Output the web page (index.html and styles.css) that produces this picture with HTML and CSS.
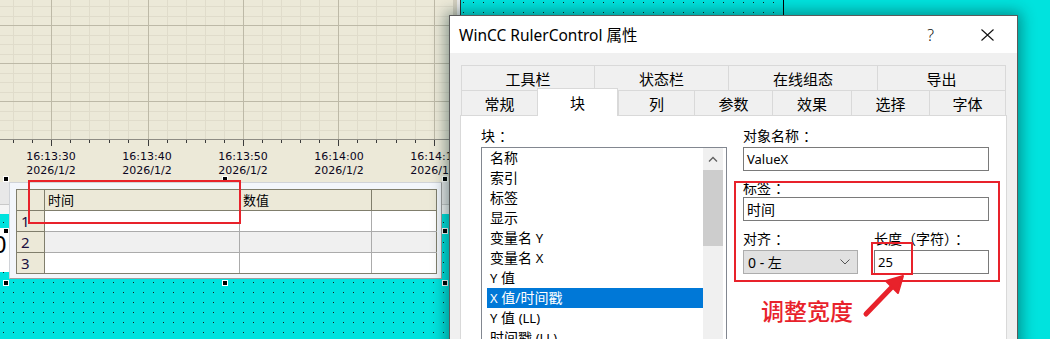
FILE: index.html
```html
<!DOCTYPE html>
<html lang="zh-CN">
<head>
<meta charset="utf-8">
<title>WinCC RulerControl 属性</title>
<link rel="stylesheet" href="styles.css">
</head>
<body>
<div class="desk">
  <div class="dots"></div>
  <div class="plain"></div>

  <div class="chart">
    <svg class="grid" width="453" height="182" viewBox="0 0 453 182">
      <g stroke="#E0DCCB" stroke-width="1" shape-rendering="crispEdges">
        <path d="M13.5 0V139 M32.5 0V139 M70.5 0V139 M89.5 0V139 M109.5 0V139 M128.5 0V139 M167.5 0V139 M186.5 0V139 M205.5 0V139 M224.5 0V139 M262.5 0V139 M281.5 0V139 M300.5 0V139 M319.5 0V139 M357.5 0V139 M376.5 0V139 M396.5 0V139 M415.5 0V139"/>
        <path d="M0 6.5H453 M0 16.5H453 M0 35.5H453 M0 44.5H453 M0 54.5H453 M0 73.5H453 M0 82.5H453 M0 92.5H453 M0 111.5H453 M0 120.5H453 M0 130.5H453"/>
      </g>
      <g stroke="#BDB9A7" stroke-width="1" shape-rendering="crispEdges">
        <path d="M51.5 0V139 M148.5 0V139 M243.5 0V139 M338.5 0V139 M434.5 0V139"/>
        <path d="M0 25.5H453 M0 63.5H453 M0 101.5H453"/>
      </g>
      <g stroke="#8E8C84" stroke-width="1" shape-rendering="crispEdges">
        <path d="M0 139.5H453"/>
      </g>
      <g stroke="#3C3C3C" stroke-width="1" shape-rendering="crispEdges">
        <path d="M51.5 140V146 M148.5 140V146 M243.5 140V146 M338.5 140V146 M434.5 140V146"/>
        <path d="M13.5 140V143 M32.5 140V143 M70.5 140V143 M89.5 140V143 M109.5 140V143 M128.5 140V143 M167.5 140V143 M186.5 140V143 M205.5 140V143 M224.5 140V143 M262.5 140V143 M281.5 140V143 M300.5 140V143 M319.5 140V143 M357.5 140V143 M376.5 140V143 M396.5 140V143 M415.5 140V143"/>
      </g>
    </svg>
    <div class="axis-labels">
      <div class="tl">16:13:30<br>2026/1/2</div>
      <div class="tl">16:13:40<br>2026/1/2</div>
      <div class="tl">16:13:50<br>2026/1/2</div>
      <div class="tl">16:14:00<br>2026/1/2</div>
      <div class="tl">16:14:10<br>2026/1/2</div>
    </div>
    <div class="frame-edge"></div>
  </div>

  <div class="toolstrip"></div>
  <div class="valuebox"><span>0</span></div>

  <div class="table-obj">
    <table class="tgrid">
      <colgroup><col class="c0"><col class="c1"><col class="c2"><col class="c3"></colgroup>
      <tr class="hdr"><th></th><th>时间</th><th>数值</th><th></th></tr>
      <tr class="r1"><th>1</th><td></td><td></td><td></td></tr>
      <tr class="r2"><th>2</th><td></td><td></td><td></td></tr>
      <tr class="r3"><th>3</th><td></td><td></td><td></td></tr>
    </table>
  </div>

  <div class="handle h1"></div>
  <div class="handle h2"></div>
  <div class="handle h3"></div>
  <div class="handle h4"></div>
  <div class="handle h5"></div>
  <div class="handle h6"></div>
  <div class="handle h7"></div>
  <div class="handle h8"></div>

  <div class="mark mark-table"></div>

  <div class="dialog">
    <div class="titlebar">
      <span class="title">WinCC RulerControl 属性</span>
      <span class="help">?</span>
      <svg class="close" width="13" height="12" viewBox="0 0 13 12"><path d="M0.5 0.5L12.5 11.5M12.5 0.5L0.5 11.5" stroke="#111" stroke-width="1.1" fill="none"/></svg>
    </div>
    <div class="dbody">
      <div class="tabrow row-top">
        <div class="tab">工具栏</div>
        <div class="tab">状态栏</div>
        <div class="tab">在线组态</div>
        <div class="tab last">导出</div>
      </div>
      <div class="tabrow row-bot">
        <div class="tab">常规</div>
        <div class="tab sel">块</div>
        <div class="tab">列</div>
        <div class="tab">参数</div>
        <div class="tab">效果</div>
        <div class="tab">选择</div>
        <div class="tab last">字体</div>
      </div>
      <div class="panel">
        <div class="col-left">
          <div class="lbl">块<span class="fc">：</span></div>
          <div class="listbox">
            <div class="items">
              <div class="item">名称</div>
              <div class="item">索引</div>
              <div class="item">标签</div>
              <div class="item">显示</div>
              <div class="item">变量名 <span class="lat">Y</span></div>
              <div class="item">变量名 <span class="lat">X</span></div>
              <div class="item"><span class="lat">Y</span> 值</div>
              <div class="item selected"><span class="lat">X</span> 值/时间戳</div>
              <div class="item"><span class="lat">Y</span> 值 <span class="lat">(LL)</span></div>
              <div class="item">时间戳 <span class="lat">(LL)</span></div>
            </div>
            <div class="vscroll">
              <div class="sbtn"><svg width="10" height="6" viewBox="0 0 10 6"><path d="M1 5.5L5 1.5L9 5.5" stroke="#606060" stroke-width="1.3" fill="none"/></svg></div>
              <div class="thumb"></div>
            </div>
          </div>
        </div>
        <div class="col-right">
          <div class="lbl">对象名称<span class="fc">：</span></div>
          <div class="field"><span class="lat">ValueX</span></div>
          <div class="lbl l2">标签<span class="fc">：</span></div>
          <div class="field">时间</div>
          <div class="pair">
            <div class="lbl">对齐<span class="fc">：</span></div>
            <div class="lbl">长度（字符）<span class="fc">：</span></div>
            <div class="combo"><span>0 - 左</span><svg width="10" height="6" viewBox="0 0 10 6"><path d="M0.5 0.5L5 5L9.5 0.5" stroke="#555" stroke-width="1" fill="none"/></svg></div>
            <div class="field"><span class="lat">25</span></div>
          </div>
        </div>
      </div>
    </div>
  </div>

  <div class="mark mark-big"></div>
  <div class="mark mark-small"></div>
  <div class="note">调整宽度</div>
  <svg class="arrow" width="60" height="60" viewBox="850 265 60 60">
    <path d="M866 314L892 287" stroke="#E8222B" stroke-width="5" stroke-linecap="round" fill="none"/>
    <path d="M903 276L898 293L886 281Z" fill="#E8222B" stroke="#E8222B" stroke-width="2" stroke-linejoin="round"/>
  </svg>
</div>
</body>
</html>
```

FILE: styles.css
```css
* { box-sizing: border-box; margin: 0; padding: 0; }

html, body {
  width: 1050px;
  height: 339px;
  overflow: hidden;
}

body {
  background: #00E3DE;
  font-family: "Noto Sans", "Noto Sans CJK SC", sans-serif;
  color: #000;
}

.desk {
  position: relative;
  width: 1050px;
  height: 339px;
  overflow: hidden;
  background: #00E3DE;
}

.dots {
  position: absolute;
  inset: 0;
  background: repeating-linear-gradient(90deg, #1a1a1a 0 1px, transparent 1px 10px);
  background-position: 3px 0;
  -webkit-mask-image: repeating-linear-gradient(180deg, #000 0 1px, transparent 1px 10px);
  -webkit-mask-position: 0 2px;
  mask-image: repeating-linear-gradient(180deg, #000 0 1px, transparent 1px 10px);
  mask-position: 0 2px;
}

.plain {
  position: absolute;
  left: 783px;
  top: 0;
  right: 0;
  bottom: 0;
  background: #00E3DE;
  border-left: 1px solid #000;
}

/* ---------- trend chart ---------- */
.chart {
  position: absolute;
  left: 0;
  top: 0;
  width: 461px;
  height: 182px;
  background: #ECE9D8;
  border-right: 1px solid #2e2e2e;
}

.grid {
  display: block;
  position: absolute;
  left: 0;
  top: 0;
}

.frame-edge {
  position: absolute;
  left: 453px;
  top: 0;
  width: 7px;
  height: 100%;
  background: linear-gradient(90deg, #D3CFBF 0 4px, #E9E9E9 4px 7px);
}

.axis-labels {
  position: absolute;
  left: 3px;
  top: 150px;
  display: flex;
}

.tl {
  width: 96px;
  text-align: center;
  font-family: "DejaVu Sans", sans-serif;
  font-size: 11px;
  line-height: 14px;
  color: #0a0520;
  white-space: nowrap;
}

/* ---------- objects behind the table ---------- */
.toolstrip {
  position: absolute;
  left: 0;
  top: 182px;
  width: 449px;
  height: 32px;
  background: linear-gradient(180deg, #E8E8E8 0 22px, #C9C9C9 22px 23px, #F5F5F5 23px);
}

.valuebox {
  position: absolute;
  left: 0;
  top: 228px;
  width: 12px;
  height: 44px;
  background: #fff;
  overflow: hidden;
}

.valuebox span {
  position: absolute;
  left: -7px;
  top: 2px;
  font-family: "Liberation Sans", sans-serif;
  font-size: 24px;
  line-height: 30px;
  color: #000;
}

/* ---------- table control ---------- */
.table-obj {
  position: absolute;
  left: 9px;
  top: 182px;
  width: 433px;
  height: 97px;
  background: #F3F6FB;
  border: 1px solid #D0D3D8;
  border-right-color: #9E9E9E;
  border-bottom-color: #9E9E9E;
  padding: 6px 0 0 6px;
}

.tgrid {
  border-collapse: collapse;
  table-layout: fixed;
  width: 420px;
  border: 1px solid #807E6C;
}

.tgrid .c0 { width: 28px; }
.tgrid .c1 { width: 195px; }
.tgrid .c2 { width: 132px; }
.tgrid .c3 { width: 65px; }

.tgrid th, .tgrid td {
  height: 21px;
  padding: 0;
  font-weight: normal;
  text-align: left;
  vertical-align: middle;
  font-family: "Noto Sans CJK SC", sans-serif;
  font-size: 13px;
  line-height: 20px;
}

.tgrid .hdr th {
  background: #ECE9D8;
  border: 1px solid #807E6C;
  padding-left: 3px;
}

.tgrid tr th:first-child {
  background: #ECE9D8;
  border: 1px solid #807E6C;
}

.tgrid tr:not(.hdr) th {
  font-family: "Noto Sans", sans-serif;
  font-size: 15px;
  padding-left: 4px;
  color: #1a1040;
}

.tgrid td {
  border: 1px solid #ABABAB;
  background: #fff;
}

.tgrid .r2 td { background: #F0F0F0; }
.tgrid .r3 th, .tgrid .r3 td { height: 20px; }
.tgrid td:last-child { border-right-color: #807E6C; }
.tgrid .r3 td { border-bottom-color: #807E6C; }

/* selection handles */
.handle {
  position: absolute;
  width: 6px;
  height: 6px;
  background: #000;
  border: 1px solid #fff;
}
.h1 { left: 3px; top: 176px; }
.h2 { left: 222px; top: 176px; }
.h3 { left: 442px; top: 176px; }
.h4 { left: 3px; top: 228px; }
.h5 { left: 442px; top: 228px; }
.h6 { left: 3px; top: 280px; }
.h7 { left: 222px; top: 280px; }
.h8 { left: 442px; top: 280px; }

/* ---------- annotations ---------- */
.mark {
  position: absolute;
  border: 2px solid #E8222B;
}
.mark-table { left: 28px; top: 180px; width: 213px; height: 44px; }
.mark-big { left: 734px; top: 181px; width: 266px; height: 101px; }
.mark-small { left: 871px; top: 242px; width: 42px; height: 33px; }

.note {
  position: absolute;
  left: 761px;
  top: 294px;
  font-family: "Noto Sans CJK SC", sans-serif;
  font-size: 23px;
  line-height: 32px;
  color: #E8222B;
  font-weight: 500;
}

.arrow {
  position: absolute;
  left: 850px;
  top: 265px;
}

/* ---------- dialog ---------- */
.dialog {
  position: absolute;
  left: 449px;
  top: 15px;
  width: 569px;
  height: 340px;
  border: 1px solid #5a5a5a;
  background: #F0F0F0;
  box-shadow: 0 0 14px 3px rgba(0, 40, 40, 0.45);
}

.titlebar {
  height: 37px;
  background: #fff;
  display: flex;
  align-items: center;
  padding-left: 9px;
}

.title {
  font-size: 15.5px;
  line-height: 20px;
  color: #000;
  flex: 1;
  padding-top: 1px;
}

.help {
  font-family: "Noto Sans", sans-serif;
  font-size: 16px;
  line-height: 20px;
  font-weight: 300;
  margin-right: 47px;
  color: #111;
}

.close {
  display: block;
  margin-right: 23px;
}

.dbody {
  padding: 12px 0 0 10px;
}

.tabrow {
  display: grid;
  margin-left: 1px;
  height: 25px;
  font-size: 15px;
}

.row-top { grid-template-columns: 133px 134px 149px 129px; }
.row-bot { grid-template-columns: 76px 81px 76px 78px 79px 78px 77px; }

.tab {
  height: 25px;
  border-left: 1px solid #D9D9D9;
  border-top: 1px solid #D9D9D9;
  background: #F0F0F0;
  display: flex;
  align-items: center;
  justify-content: center;
  line-height: 20px;
  padding-top: 1px;
}

.tab.last { border-right: 1px solid #D9D9D9; }

.tab.sel {
  position: relative;
  z-index: 2;
  top: -2px;
  height: 28px;
  background: #fff;
  border-right: 1px solid #D9D9D9;
  padding-top: 0;
}

.panel {
  position: relative;
  width: 547px;
  height: 240px;
  background: #fff;
  border: 1px solid #D9D9D9;
  display: flex;
  gap: 16px;
  padding: 10px 0 0 20px;
  font-size: 14px;
}

.lbl {
  height: 21px;
  line-height: 20px;
  font-size: 14px;
  white-space: nowrap;
}

/* full-width colon drawn centred in its cell, as on the source UI */
.fc {
  margin-left: 4px;
  margin-right: -4px;
}

.col-left { width: 246px; }

.listbox {
  height: 200px;
  border: 1px solid #828790;
  display: flex;
  padding: 0 3px 0 5px;
}

.items { flex: 1; }

.item {
  height: 20px;
  line-height: 20px;
  padding-left: 3px;
  white-space: nowrap;
}

.item.selected {
  background: #0078D7;
  color: #fff;
}

.lat {
  font-family: "Noto Sans", sans-serif;
  font-size: 13px;
}

.vscroll {
  width: 20px;
  background: #F0F0F0;
}

.sbtn {
  height: 22px;
  display: flex;
  align-items: center;
  justify-content: center;
}

.thumb {
  height: 76px;
  background: #CDCDCD;
}

.col-right {
  width: 246px;
  display: flex;
  flex-direction: column;
}

.field {
  height: 24px;
  border: 1px solid #7A7A7A;
  background: #fff;
  padding-left: 3px;
  display: flex;
  align-items: center;
  font-size: 14px;
}

.col-right .l2 { margin-top: 7px; height: 19px; }

.pair {
  margin-top: 8px;
  display: grid;
  grid-template-columns: 115px 115px;
  column-gap: 16px;
}

.combo {
  height: 24px;
  border: 1px solid #ADADAD;
  background: #E1E1E1;
  display: flex;
  align-items: center;
  justify-content: space-between;
  padding: 0 7px 0 4px;
  font-size: 14px;
}
```
